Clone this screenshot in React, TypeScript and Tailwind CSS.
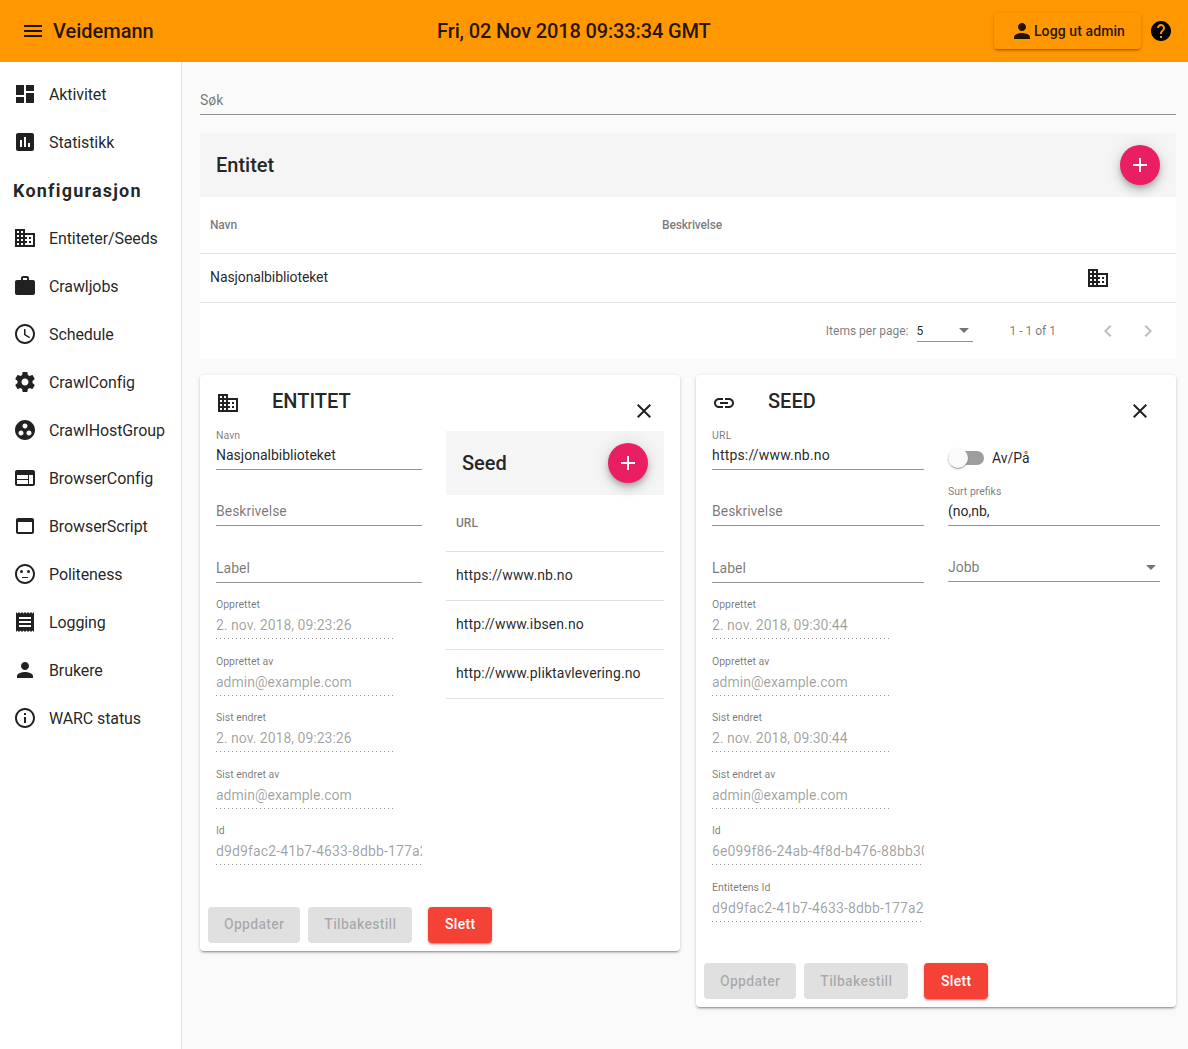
import type { ReactNode } from 'react';

const ICONS = {
  menu: 'M3 18h18v-2H3v2zm0-5h18v-2H3v2zm0-7v2h18V6H3z',
  dashboard: 'M3 13h8V3H3v10zm0 8h8v-6H3v6zm10 0h8V11h-8v10zm0-18v6h8V3h-8z',
  assessment:
    'M19 3H5c-1.1 0-2 .9-2 2v14c0 1.1.9 2 2 2h14c1.1 0 2-.9 2-2V5c0-1.1-.9-2-2-2zM9 17H7v-7h2v7zm4 0h-2V7h2v10zm4 0h-2v-4h2v4z',
  domain:
    'M12 7V3H2v18h20V7H12zM6 19H4v-2h2v2zm0-4H4v-2h2v2zm0-4H4V9h2v2zm0-4H4V5h2v2zm4 12H8v-2h2v2zm0-4H8v-2h2v2zm0-4H8V9h2v2zm0-4H8V5h2v2zm10 12h-8v-2h2v-2h-2v-2h2v-2h-2V9h8v10zm-2-8h-2v2h2v-2zm0 4h-2v2h2v-2z',
  work: 'M20 6h-4V4c0-1.11-.89-2-2-2h-4c-1.11 0-2 .89-2 2v2H4c-1.11 0-1.99.89-1.99 2L2 19c0 1.11.89 2 2 2h16c1.11 0 2-.89 2-2V8c0-1.11-.89-2-2-2zm-6 0h-4V4h4v2z',
  schedule:
    'M11.99 2C6.47 2 2 6.48 2 12s4.47 10 9.99 10C17.52 22 22 17.52 22 12S17.52 2 11.99 2zM12 20c-4.42 0-8-3.58-8-8s3.58-8 8-8 8 3.58 8 8-3.58 8-8 8zm.5-13H11v6l5.25 3.15.75-1.23-4.5-2.67z',
  settings:
    'M19.43 12.98c.04-.32.07-.64.07-.98s-.03-.66-.07-.98l2.11-1.65c.19-.15.24-.42.12-.64l-2-3.46c-.12-.22-.39-.3-.61-.22l-2.49 1c-.52-.4-1.08-.73-1.69-.98l-.38-2.65C14.46 2.18 14.25 2 14 2h-4c-.25 0-.46.18-.49.42l-.38 2.65c-.61.25-1.17.59-1.69.98l-2.49-1c-.23-.09-.49 0-.61.22l-2 3.46c-.13.22-.07.49.12.64l2.11 1.65c-.04.32-.07.65-.07.98s.03.66.07.98l-2.11 1.65c-.19.15-.24.42-.12.64l2 3.46c.12.22.39.3.61.22l2.49-1c.52.4 1.08.73 1.69.98l.38 2.65c.03.24.24.42.49.42h4c.25 0 .46-.18.49-.42l.38-2.65c.61-.25 1.17-.59 1.69-.98l2.49 1c.23.09.49 0 .61-.22l2-3.46c.12-.22.07-.49-.12-.64l-2.11-1.65zM12 15.5c-1.93 0-3.5-1.57-3.5-3.5s1.57-3.5 3.5-3.5 3.5 1.57 3.5 3.5-1.57 3.5-3.5 3.5z',
  groupWork:
    'M12 2C6.48 2 2 6.48 2 12s4.48 10 10 10 10-4.48 10-10S17.52 2 12 2zM8 17.5c-1.38 0-2.5-1.12-2.5-2.5s1.12-2.5 2.5-2.5 2.5 1.12 2.5 2.5-1.12 2.5-2.5 2.5zM9.5 8c0-1.38 1.12-2.5 2.5-2.5s2.5 1.12 2.5 2.5-1.12 2.5-2.5 2.5S9.5 9.38 9.5 8zm6.5 9.5c-1.38 0-2.5-1.12-2.5-2.5s1.12-2.5 2.5-2.5 2.5 1.12 2.5 2.5-1.12 2.5-2.5 2.5z',
  web: 'M20 4H4c-1.1 0-1.99.9-1.99 2L2 18c0 1.1.9 2 2 2h16c1.1 0 2-.9 2-2V6c0-1.1-.9-2-2-2zm-5 14H4v-4h11v4zm0-5H4V9h11v4zm5 5h-4V9h4v9z',
  webAsset:
    'M19 4H5c-1.11 0-2 .9-2 2v12c0 1.1.89 2 2 2h14c1.1 0 2-.9 2-2V6c0-1.1-.89-2-2-2zm0 14H5V8h14v10z',
  neutral:
    'M9 15h6v1H9zM15.5 8a1.5 1.5 0 1 0 0 3 1.5 1.5 0 0 0 0-3zM8.5 8a1.5 1.5 0 1 0 0 3 1.5 1.5 0 0 0 0-3zM11.99 2C6.47 2 2 6.48 2 12s4.47 10 9.99 10C17.52 22 22 17.52 22 12S17.52 2 11.99 2zM12 20c-4.42 0-8-3.58-8-8s3.58-8 8-8 8 3.58 8 8-3.58 8-8 8z',
  receipt:
    'M18 17H6v-2h12v2zm0-4H6v-2h12v2zm0-4H6V7h12v2zM3 22l1.5-1.5L6 22l1.5-1.5L9 22l1.5-1.5L12 22l1.5-1.5L15 22l1.5-1.5L18 22l1.5-1.5L21 22V2l-1.5 1.5L18 2l-1.5 1.5L15 2l-1.5 1.5L12 2l-1.5 1.5L9 2 7.5 3.5 6 2 4.5 3.5 3 2v20z',
  person:
    'M12 12c2.21 0 4-1.79 4-4s-1.79-4-4-4-4 1.79-4 4 1.79 4 4 4zm0 2c-2.67 0-8 1.34-8 4v2h16v-2c0-2.66-5.33-4-8-4z',
  info: 'M11 17h2v-6h-2v6zm1-15C6.48 2 2 6.48 2 12s4.48 10 10 10 10-4.48 10-10S17.52 2 12 2zm0 18c-4.41 0-8-3.59-8-8s3.59-8 8-8 8 3.59 8 8-3.59 8-8 8zM11 9h2V7h-2v2z',
  help: 'M12 2C6.48 2 2 6.48 2 12s4.48 10 10 10 10-4.48 10-10S17.52 2 12 2zm1 17h-2v-2h2v2zm2.07-7.75l-.9.92C13.45 12.9 13 13.5 13 15h-2v-.5c0-1.1.45-2.1 1.17-2.83l1.24-1.26c.37-.36.59-.86.59-1.41 0-1.1-.9-2-2-2s-2 .9-2 2H8c0-2.21 1.79-4 4-4s4 1.79 4 4c0 .88-.36 1.68-.93 2.25z',
  link: 'M3.9 12c0-1.71 1.39-3.1 3.1-3.1h4V7H7c-2.76 0-5 2.24-5 5s2.24 5 5 5h4v-1.9H7c-1.71 0-3.1-1.39-3.1-3.1zM8 13h8v-2H8v2zm9-6h-4v1.9h4c1.71 0 3.1 1.39 3.1 3.1s-1.39 3.1-3.1 3.1h-4V17h4c2.76 0 5-2.24 5-5s-2.24-5-5-5z',
  close:
    'M19 6.41L17.59 5 12 10.59 6.41 5 5 6.41 10.59 12 5 17.59 6.41 19 12 13.41 17.59 19 19 17.59 13.41 12z',
  add: 'M19 13h-6v6h-2v-6H5v-2h6V5h2v6h6v2z',
  left: 'M15.41 7.41L14 6l-6 6 6 6 1.41-1.41L10.83 12z',
  right: 'M10 6L8.59 7.41 13.17 12l-4.58 4.59L10 18l6-6z',
};

function Icon({ name, className = '' }: { name: keyof typeof ICONS; className?: string }) {
  return (
    <svg viewBox="0 0 24 24" fill="currentColor" className={`h-6 w-6 shrink-0 ${className}`}>
      <path d={ICONS[name]} />
    </svg>
  );
}

const NAV_TOP: [keyof typeof ICONS, string][] = [
  ['dashboard', 'Aktivitet'],
  ['assessment', 'Statistikk'],
];

const NAV_CONFIG: [keyof typeof ICONS, string][] = [
  ['domain', 'Entiteter/Seeds'],
  ['work', 'Crawljobs'],
  ['schedule', 'Schedule'],
  ['settings', 'CrawlConfig'],
  ['groupWork', 'CrawlHostGroup'],
  ['web', 'BrowserConfig'],
  ['webAsset', 'BrowserScript'],
  ['neutral', 'Politeness'],
  ['receipt', 'Logging'],
  ['person', 'Brukere'],
  ['info', 'WARC status'],
];

function NavItem({ icon, label }: { icon: keyof typeof ICONS; label: string }) {
  return (
    <div className="flex h-12 items-center pl-[13px] text-[16px] tracking-[-.1px] text-black/[.87]">
      <Icon name={icon} />
      <span className="mt-[2px] ml-3">{label}</span>
    </div>
  );
}

function Fab() {
  return (
    <button className="flex h-10 w-10 items-center justify-center rounded-full bg-[#e91e63] text-white shadow-[0_3px_5px_-1px_rgba(0,0,0,.2),0_6px_10px_0_rgba(0,0,0,.14),0_1px_18px_0_rgba(0,0,0,.12)]">
      <Icon name="add" />
    </button>
  );
}

function Field({ label, value, placeholder }: { label?: string; value?: string; placeholder?: string }) {
  return (
    <div className="flex h-[56.5px] flex-col justify-end">
      {label ? <div className="h-3 text-[10.5px] leading-3 text-black/[.54]">{label}</div> : null}
      <div className="flex h-[28px] items-center border-b border-black/[.42] text-[14px]">
        {value ? (
          <span className="text-black/[.87]">{value}</span>
        ) : (
          <span className="text-black/[.54]">{placeholder}</span>
        )}
      </div>
    </div>
  );
}

function ReadOnly({ label, value, wide }: { label: string; value: string; wide?: boolean }) {
  return (
    <div className="flex h-[56.5px] flex-col justify-end">
      <div className="h-3 text-[10.5px] leading-3 text-black/[.54]">{label}</div>
      <div
        className={`h-[27px] overflow-hidden pt-[4px] text-[14px] leading-[20px] whitespace-nowrap text-black/[.38] ${
          wide ? 'w-full tracking-[.12px]' : 'w-[178px]'
        }`}
      >
        {value}
      </div>
      <div
        className={`h-px bg-[linear-gradient(to_right,rgba(0,0,0,.42)_0%,rgba(0,0,0,.42)_33%,transparent_0%)] bg-[length:4px_1px] bg-repeat-x ${
          wide ? 'w-full' : 'w-[178px]'
        }`}
      />
    </div>
  );
}

function MetaFields({ created, id, entityId }: { created: string; id: string; entityId?: string }) {
  return (
    <>
      <ReadOnly label="Opprettet" value={created} />
      <ReadOnly label="Opprettet av" value="admin@example.com" />
      <ReadOnly label="Sist endret" value={created} />
      <ReadOnly label="Sist endret av" value="admin@example.com" />
      <ReadOnly label="Id" value={id} wide />
      {entityId ? <ReadOnly label="Entitetens Id" value={entityId} wide /> : null}
    </>
  );
}

function Actions() {
  const disabled = 'h-9 rounded bg-[#e0e0e0] px-4 text-[14px] font-medium tracking-[.3px] text-black/[.26]';
  return (
    <div className="mt-[41.4px] flex gap-2 px-2 pb-2">
      <button className={disabled}>Oppdater</button>
      <button className={disabled}>Tilbakestill</button>
      <button className="ml-2 h-9 min-w-16 rounded bg-[#f44336] px-4 text-[14px] font-medium tracking-[.3px] text-white shadow-[0_3px_1px_-2px_rgba(0,0,0,.2),0_2px_2px_0_rgba(0,0,0,.14),0_1px_5px_0_rgba(0,0,0,.12)]">
        Slett
      </button>
    </div>
  );
}

function CardTitle({ icon, children }: { icon: keyof typeof ICONS; children: ReactNode }) {
  return (
    <div className="flex h-[22.4px] items-start">
      <Icon name={icon} className="text-black/[.87]" />
      <h2 className="ml-8 text-[20px] leading-5 font-medium text-black/[.87]">{children}</h2>
    </div>
  );
}

function CloseRow() {
  return (
    <div className="flex h-10 justify-end">
      <button className="flex h-10 w-10 items-center justify-center text-black/[.87]">
        <Icon name="close" />
      </button>
    </div>
  );
}

function Card({ children }: { children: ReactNode }) {
  return (
    <section className="w-[480px] rounded bg-white shadow-[0_3px_1px_-2px_rgba(0,0,0,.2),0_2px_2px_0_rgba(0,0,0,.14),0_1px_5px_0_rgba(0,0,0,.12)]">
      {children}
    </section>
  );
}

const SEEDS = ['https://www.nb.no', 'http://www.ibsen.no', 'http://www.pliktavlevering.no'];

export default function App() {
  return (
    <div className="flex min-h-screen flex-col bg-[#fafafa] font-[Roboto,sans-serif]">
      <header className="flex h-[62px] shrink-0 items-center bg-[#ff9800] pr-[15px] pl-[21px] text-black/[.87]">
        <Icon name="menu" />
        <span className="ml-2 text-[20px] font-medium">Veidemann</span>
        <div className="flex-1 text-center text-[20px] font-medium tracking-[-.14px]">
          Fri, 02 Nov 2018 09:33:34 GMT
        </div>
        <button className="flex h-9 items-center rounded bg-[#ff9800] px-4 text-[14px] font-medium tracking-[.1px] shadow-[0_3px_1px_-2px_rgba(0,0,0,.2),0_2px_2px_0_rgba(0,0,0,.14),0_1px_5px_0_rgba(0,0,0,.12)]">
          <Icon name="person" />
          Logg ut admin
        </button>
        <Icon name="help" className="ml-2 text-black" />
      </header>

      <div className="flex flex-1">
        <aside className="w-[182px] shrink-0 border-r border-black/[.12] bg-white pt-2">
          {NAV_TOP.map(([icon, label]) => (
            <NavItem key={label} icon={icon} label={label} />
          ))}
          <div className="flex h-12 items-center pl-[13px] text-[18px] font-bold tracking-[1.2px] text-black/[.87]">
            Konfigurasjon
          </div>
          {NAV_CONFIG.map(([icon, label]) => (
            <NavItem key={label} icon={icon} label={label} />
          ))}
        </aside>

        <main className="flex-1 pt-[24px] pr-3 pl-[18px]">
          <div className="flex h-[29px] items-center border-b border-black/[.42] text-[14px] text-black/[.54]">
            Søk
          </div>

          <div className="mt-[18px] bg-white">
            <div className="flex h-16 items-center justify-between bg-[#f5f5f5] pr-4 pl-4">
              <h2 className="text-[20px] font-medium text-black/[.87]">Entitet</h2>
              <Fab />
            </div>
            <div className="flex h-[57px] items-center border-b border-black/[.12] text-[12px] font-medium tracking-[-.15px] text-black/[.54]">
              <span className="w-[452px] pl-[10px]">Navn</span>
              <span className="pl-[10px]">Beskrivelse</span>
            </div>
            <div className="flex h-[49px] items-center border-b border-black/[.12] text-[14px] text-black/[.87]">
              <span className="w-[452px] pb-[2px] pl-[10px] tracking-[-.1px]">Nasjonalbiblioteket</span>
              <span className="w-[424px]" />
              <Icon name="domain" className="ml-[10px]" />
            </div>
            <div className="flex h-14 items-center justify-end pr-2 text-[12px] text-black/[.54]">
              <span>Items per page:</span>
              <div className="mr-[37px] ml-2 flex h-[22px] w-14 items-center justify-between border-b border-black/[.42] pr-1">
                <span className="text-black/[.87]">5</span>
                <span className="h-0 w-0 border-x-[5px] border-t-[5px] border-x-transparent border-t-black/[.54]" />
              </div>
              <span className="mr-8">1 - 1 of 1</span>
              <div className="flex h-10 w-10 items-center justify-center text-black/[.26]">
                <Icon name="left" />
              </div>
              <div className="flex h-10 w-10 items-center justify-center text-black/[.26]">
                <Icon name="right" />
              </div>
            </div>
          </div>

          <div className="mt-4 flex items-start gap-4">
            <Card>
              <div className="flex gap-6 px-4 pt-4">
                <div className="w-[206px]">
                  <CardTitle icon="domain">ENTITET</CardTitle>
                  <Field label="Navn" value="Nasjonalbiblioteket" />
                  <Field placeholder="Beskrivelse" />
                  <Field placeholder="Label" />
                  <MetaFields created="2. nov. 2018, 09:23:26" id="d9d9fac2-41b7-4633-8dbb-177a2a5e7c1f" />
                </div>
                <div className="w-[218px]">
                  <CloseRow />
                  <div className="flex h-16 items-center justify-between bg-[#f5f5f5] pr-4 pl-4">
                    <h2 className="text-[20px] font-medium text-black/[.87]">Seed</h2>
                    <Fab />
                  </div>
                  <div className="flex h-[57px] items-center border-b border-black/[.12] pl-[10px] text-[12px] font-medium text-black/[.54]">
                    URL
                  </div>
                  {SEEDS.map((url) => (
                    <div
                      key={url}
                      className="flex h-[49px] items-center border-b border-black/[.12] pb-[2px] pl-[10px] text-[14px] tracking-[.12px] text-black/[.87]"
                    >
                      {url}
                    </div>
                  ))}
                </div>
              </div>
              <Actions />
            </Card>

            <Card>
              <div className="flex gap-6 px-4 pt-4">
                <div className="w-[212px]">
                  <CardTitle icon="link">SEED</CardTitle>
                  <div className="tracking-[.18px]">
                    <Field label="URL" value="https://www.nb.no" />
                  </div>
                  <Field placeholder="Beskrivelse" />
                  <Field placeholder="Label" />
                  <MetaFields
                    created="2. nov. 2018, 09:30:44"
                    id="6e099f86-24ab-4f8d-b476-88bb30d1e52c"
                    entityId="d9d9fac2-41b7-4633-8dbb-177a2a5e7c1f"
                  />
                </div>
                <div className="w-[212px]">
                  <CloseRow />
                  <div className="flex h-[38.5px] items-center pt-4 text-[14px] text-black/[.87]">
                    <div className="relative h-[14px] w-9 rounded-full bg-[#9e9e9e]">
                      <span className="absolute top-[-3px] left-0 h-5 w-5 rounded-full bg-[#fafafa] shadow-[0_2px_1px_-1px_rgba(0,0,0,.2),0_1px_1px_0_rgba(0,0,0,.14),0_1px_3px_0_rgba(0,0,0,.12)]" />
                    </div>
                    <span className="ml-2">Av/På</span>
                  </div>
                  <Field label="Surt prefiks" value="(no,nb," />
                  <div className="flex h-[56px] flex-col justify-end">
                    <div className="flex h-[28px] items-center justify-between border-b border-black/[.42] pr-[4px] text-[14px] text-black/[.54]">
                      Jobb
                      <span className="h-0 w-0 border-x-[5px] border-t-[5px] border-x-transparent border-t-black/[.54]" />
                    </div>
                  </div>
                </div>
              </div>
              <Actions />
            </Card>
          </div>
        </main>
      </div>
    </div>
  );
}
